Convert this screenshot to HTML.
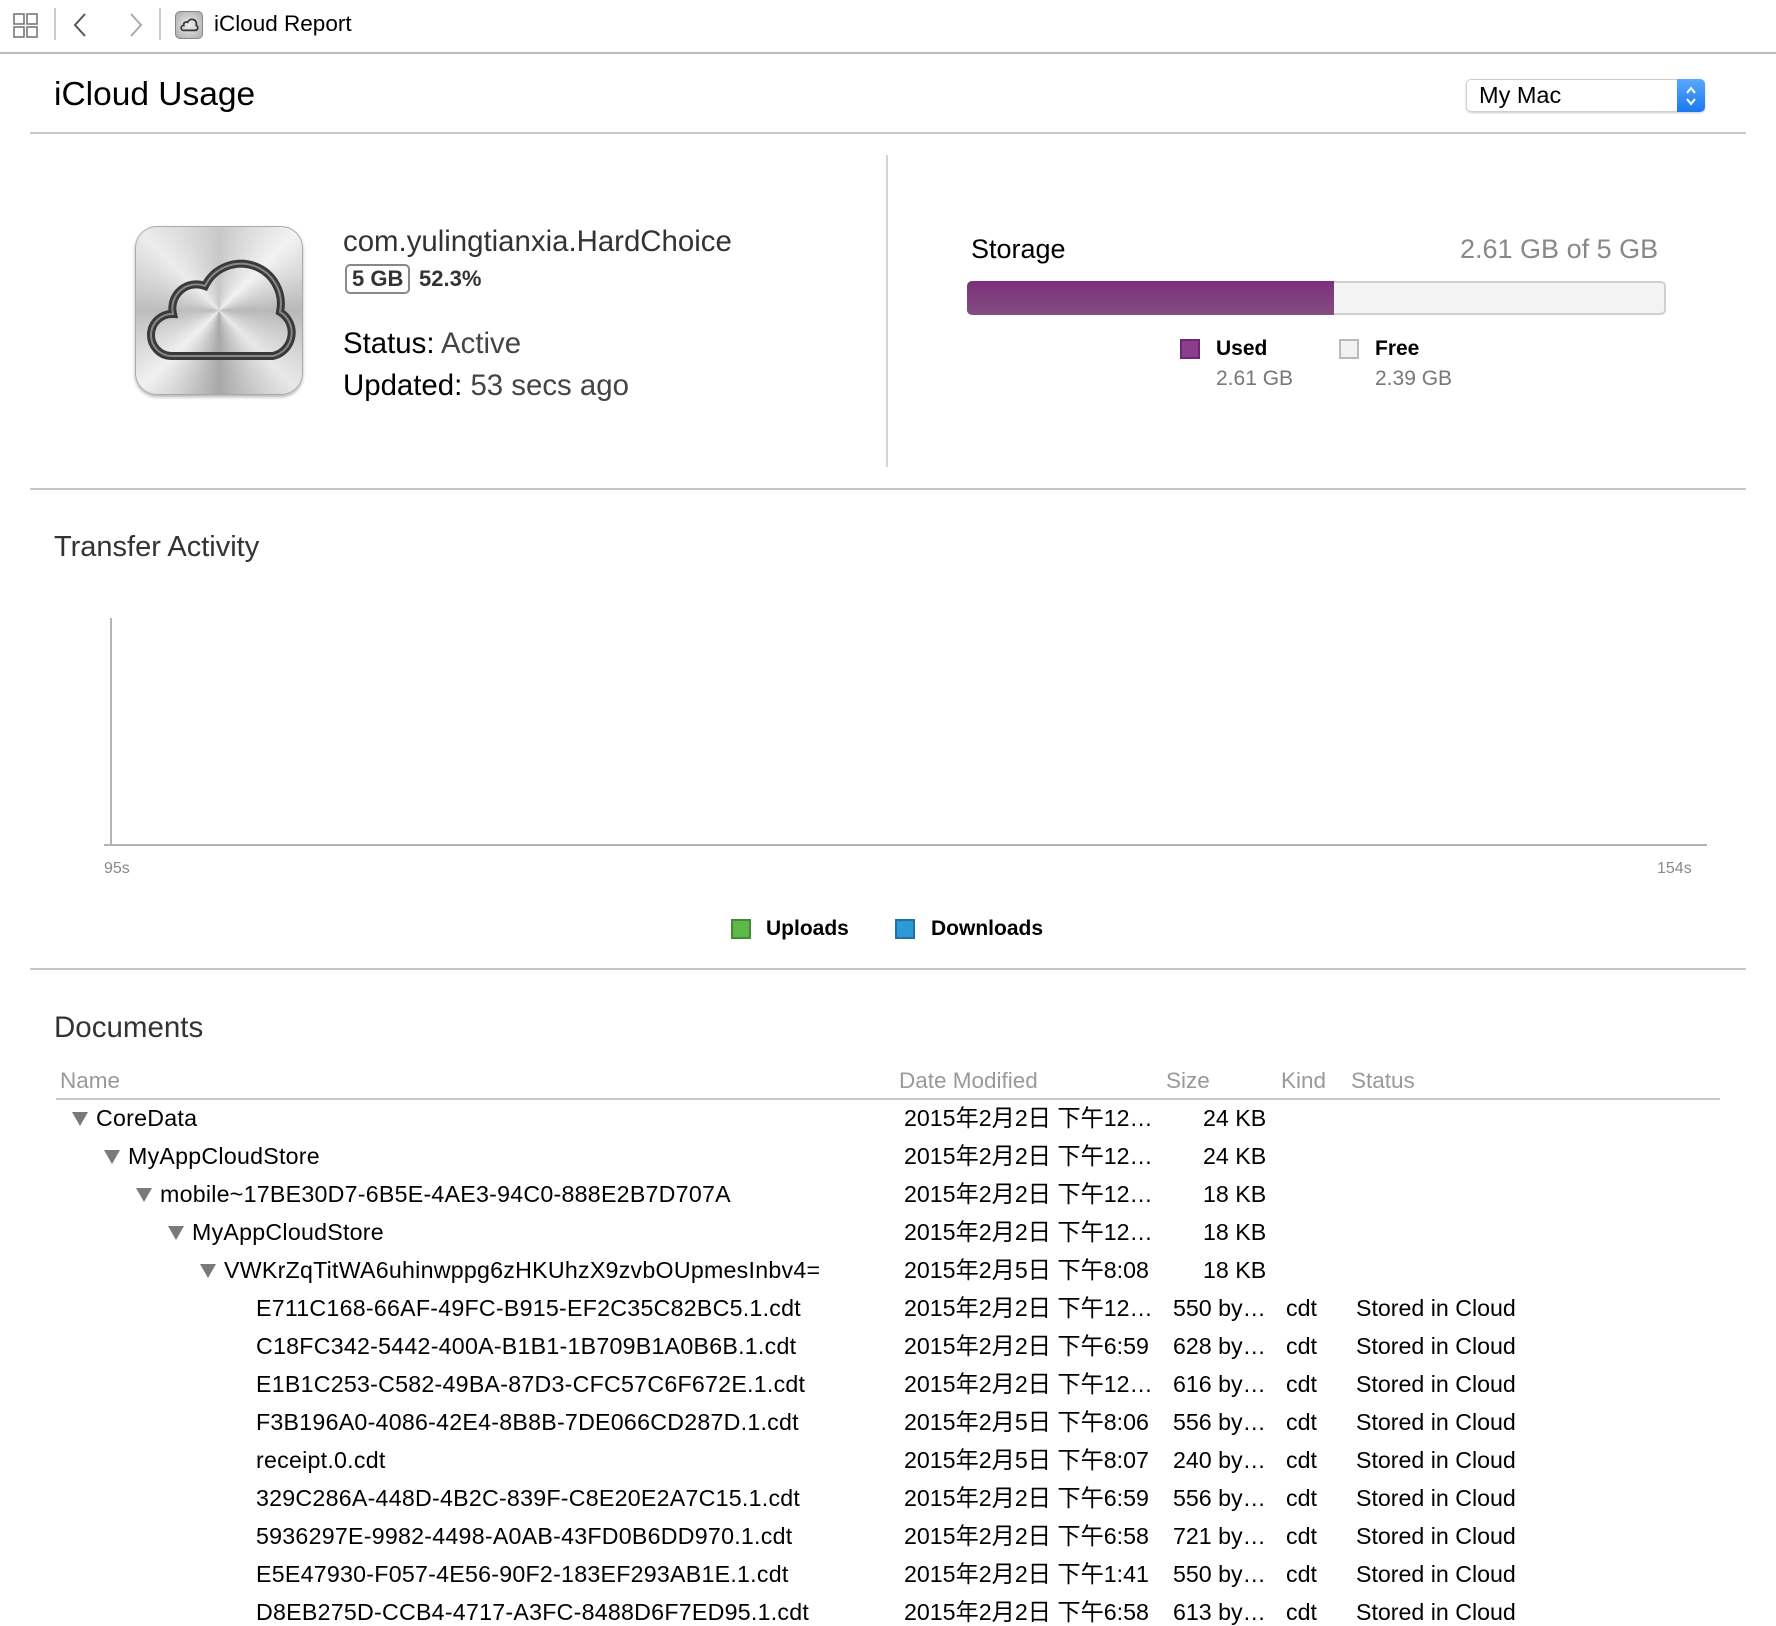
<!DOCTYPE html>
<html><head><meta charset="utf-8">
<style>
*{margin:0;padding:0;box-sizing:border-box}
body{width:1776px;height:1626px;background:#fff;position:relative;overflow:hidden;font-family:"Liberation Sans","Noto Sans CJK SC",sans-serif;color:#000}
.a{position:absolute;white-space:nowrap}
.hl{position:absolute;height:2px;background:#c8c8c8}
.r{position:absolute;font-size:23.2px;line-height:26px;white-space:nowrap}
.n{letter-spacing:0.25px}
.tri{position:absolute;width:0;height:0;border-left:8px solid transparent;border-right:8px solid transparent;border-top:14px solid #7a7a7a}
</style></head><body>
<!-- toolbar -->
<svg class="a" style="left:12px;top:12px" width="28" height="28" viewBox="0 0 28 28" fill="none" stroke="#777" stroke-width="1.6">
<rect x="2" y="2" width="10" height="10"/><rect x="15" y="2" width="10" height="10"/><rect x="2" y="15" width="10" height="10"/><rect x="15" y="15" width="10" height="10"/>
</svg>
<div class="a" style="left:54px;top:8px;width:2px;height:32px;background:#ccc"></div>
<svg class="a" style="left:72px;top:12px" width="16" height="26" viewBox="0 0 16 26"><path d="M13 2 L3 13 L13 24" fill="none" stroke="#555" stroke-width="2"/></svg>
<svg class="a" style="left:128px;top:12px" width="16" height="26" viewBox="0 0 16 26"><path d="M3 2 L13 13 L3 24" fill="none" stroke="#aaa" stroke-width="2"/></svg>
<div class="a" style="left:159px;top:8px;width:2px;height:32px;background:#ccc"></div>
<div class="a" style="left:175px;top:11px;width:28px;height:28px;border-radius:5px;background:radial-gradient(circle,#eee,#aaa);border:1px solid #888"></div>
<svg class="a" style="left:177px;top:15px" width="24" height="20" viewBox="0 0 168 169"><path d="M38,130 H138 A22,22 0 0 0 145,88 A38,38 0 0 0 72,62 A22,22 0 0 0 40,88 A21,21 0 0 0 38,130 Z" fill="none" stroke="#333" stroke-width="14"/></svg>
<div class="a" style="left:214px;top:11px;font-size:22.5px">iCloud Report</div>
<div class="hl" style="left:0;top:52px;width:1776px;background:#bbb"></div>

<div class="a" style="left:54px;top:76px;font-size:33.5px">iCloud Usage</div>
<div class="a" style="left:1466px;top:79px;width:239px;height:33px;border:1px solid #d0d0d0;border-radius:5px;box-shadow:0 1px 2px rgba(0,0,0,.2);background:#fff"></div>
<div class="a" style="left:1479px;top:82px;font-size:23.5px">My Mac</div>
<div class="a" style="left:1677px;top:79px;width:28px;height:33px;background:linear-gradient(#5aa8ff,#1a78f0);border-radius:0 5px 5px 0"></div>
<svg class="a" style="left:1683px;top:84px" width="16" height="24" viewBox="0 0 16 24"><path d="M4 9 L8 4 L12 9 M4 15 L8 20 L12 15" fill="none" stroke="#fff" stroke-width="2"/></svg>
<div class="hl" style="left:30px;top:132px;width:1716px"></div>

<!-- app info -->
<div class="a" style="left:135px;top:226px;width:168px;height:169px;border-radius:22px;border:1px solid #aaa;background:conic-gradient(from 0deg,#c8c8c8,#f2f2f2,#b8b8b8,#e8e8e8,#a8a8a8,#f0f0f0,#bdbdbd,#ececec,#c8c8c8);box-shadow:0 2px 3px rgba(0,0,0,.3)"></div>
<svg class="a" style="left:135px;top:226px" width="168" height="169" viewBox="0 0 168 169"><path d="M36,130 H138 A24,24 0 0 0 145,86 A40,40 0 0 0 70,60 A24,24 0 0 0 38,88 A21,21 0 0 0 36,130 Z" fill="none" stroke="#3a3a3a" stroke-width="8"/><path d="M36,130 H138 A24,24 0 0 0 145,86 A40,40 0 0 0 70,60 A24,24 0 0 0 38,88 A21,21 0 0 0 36,130 Z" fill="none" stroke="#888" stroke-width="2"/></svg>
<div class="a" style="left:343px;top:225px;font-size:29.4px;color:#333">com.yulingtianxia.HardChoice</div>
<div class="a" style="left:345px;top:264px;width:65px;height:30px;border:2px solid #888;border-radius:5px"></div>
<div class="a" style="left:352px;top:266px;font-size:22px;font-weight:bold;color:#333">5 GB</div>
<div class="a" style="left:419px;top:266px;font-size:22px;font-weight:bold;color:#333">52.3%</div>
<div class="a" style="left:343px;top:327px;font-size:29.4px">Status: <span style="color:#444">Active</span></div>
<div class="a" style="left:343px;top:369px;font-size:29.4px">Updated: <span style="color:#444">53 secs ago</span></div>

<div class="a" style="left:886px;top:155px;width:2px;height:312px;background:#d4d4d4"></div>

<!-- storage -->
<div class="a" style="left:971px;top:234px;font-size:27px">Storage</div>
<div class="a" style="left:1460px;top:234px;font-size:27px;color:#888">2.61 GB of 5 GB</div>
<div class="a" style="left:967px;top:281px;width:699px;height:34px;border:2px solid #d0d0d0;border-radius:5px;background:#f3f3f3"></div>
<div class="a" style="left:967px;top:281px;width:367px;height:34px;border-radius:5px 0 0 5px;background:linear-gradient(#7e2f7e,#814f80)"></div>
<div class="a" style="left:1180px;top:339px;width:20px;height:20px;background:#8c3d8f;border:2px solid #6a2a6c"></div>
<div class="a" style="left:1216px;top:337px;font-size:21px;font-weight:bold">Used</div>
<div class="a" style="left:1216px;top:367px;font-size:21px;color:#777">2.61 GB</div>
<div class="a" style="left:1339px;top:339px;width:20px;height:20px;background:#f2f2f2;border:2px solid #bbb"></div>
<div class="a" style="left:1375px;top:337px;font-size:21px;font-weight:bold">Free</div>
<div class="a" style="left:1375px;top:367px;font-size:21px;color:#777">2.39 GB</div>

<div class="hl" style="left:30px;top:488px;width:1716px"></div>

<!-- transfer -->
<div class="a" style="left:54px;top:531px;font-size:29px;color:#333">Transfer Activity</div>
<div class="a" style="left:110px;top:618px;width:2px;height:227px;background:#b4b4b4"></div>
<div class="a" style="left:104px;top:844px;width:1603px;height:2px;background:#b4b4b4"></div>
<div class="a" style="left:104px;top:860px;font-size:16px;color:#888">95s</div>
<div class="a" style="left:1657px;top:860px;font-size:16px;color:#888">154s</div>
<div class="a" style="left:731px;top:919px;width:20px;height:20px;background:#5db84a;border:2px solid #468a39"></div>
<div class="a" style="left:766px;top:917px;font-size:21px;font-weight:bold">Uploads</div>
<div class="a" style="left:895px;top:919px;width:20px;height:20px;background:#2b9ad8;border:2px solid #1f71a3"></div>
<div class="a" style="left:931px;top:917px;font-size:21px;font-weight:bold">Downloads</div>

<div class="hl" style="left:30px;top:968px;width:1716px"></div>

<!-- documents -->
<div class="a" style="left:54px;top:1011px;font-size:29.5px;color:#333">Documents</div>
<div class="a" style="left:60px;top:1068px;font-size:22.5px;color:#999">Name</div>
<div class="a" style="left:899px;top:1068px;font-size:22.5px;color:#999">Date Modified</div>
<div class="a" style="left:1166px;top:1068px;font-size:22.5px;color:#999">Size</div>
<div class="a" style="left:1281px;top:1068px;font-size:22.5px;color:#999">Kind</div>
<div class="a" style="left:1351px;top:1068px;font-size:22.5px;color:#999">Status</div>
<div class="hl" style="left:56px;top:1098px;width:1664px"></div>

<div class="tri" style="left:72px;top:1112px"></div><div class="r n" style="left:96px;top:1105px">CoreData</div><div class="r" style="left:904px;top:1105px">2015年2月2日 下午12…</div><div class="r" style="left:1203px;top:1105px">24 KB</div>
<div class="tri" style="left:104px;top:1150px"></div><div class="r n" style="left:128px;top:1143px">MyAppCloudStore</div><div class="r" style="left:904px;top:1143px">2015年2月2日 下午12…</div><div class="r" style="left:1203px;top:1143px">24 KB</div>
<div class="tri" style="left:136px;top:1188px"></div><div class="r n" style="left:160px;top:1181px">mobile~17BE30D7-6B5E-4AE3-94C0-888E2B7D707A</div><div class="r" style="left:904px;top:1181px">2015年2月2日 下午12…</div><div class="r" style="left:1203px;top:1181px">18 KB</div>
<div class="tri" style="left:168px;top:1226px"></div><div class="r n" style="left:192px;top:1219px">MyAppCloudStore</div><div class="r" style="left:904px;top:1219px">2015年2月2日 下午12…</div><div class="r" style="left:1203px;top:1219px">18 KB</div>
<div class="tri" style="left:200px;top:1264px"></div><div class="r n" style="left:224px;top:1257px">VWKrZqTitWA6uhinwppg6zHKUhzX9zvbOUpmesInbv4=</div><div class="r" style="left:904px;top:1257px">2015年2月5日 下午8:08</div><div class="r" style="left:1203px;top:1257px">18 KB</div>

<div class="r n" style="left:256px;top:1295px">E711C168-66AF-49FC-B915-EF2C35C82BC5.1.cdt</div><div class="r" style="left:904px;top:1295px">2015年2月2日 下午12…</div><div class="r" style="left:1173px;top:1295px">550 by…</div><div class="r" style="left:1286px;top:1295px">cdt</div><div class="r" style="left:1356px;top:1295px">Stored in Cloud</div>
<div class="r n" style="left:256px;top:1333px">C18FC342-5442-400A-B1B1-1B709B1A0B6B.1.cdt</div><div class="r" style="left:904px;top:1333px">2015年2月2日 下午6:59</div><div class="r" style="left:1173px;top:1333px">628 by…</div><div class="r" style="left:1286px;top:1333px">cdt</div><div class="r" style="left:1356px;top:1333px">Stored in Cloud</div>
<div class="r n" style="left:256px;top:1371px">E1B1C253-C582-49BA-87D3-CFC57C6F672E.1.cdt</div><div class="r" style="left:904px;top:1371px">2015年2月2日 下午12…</div><div class="r" style="left:1173px;top:1371px">616 by…</div><div class="r" style="left:1286px;top:1371px">cdt</div><div class="r" style="left:1356px;top:1371px">Stored in Cloud</div>
<div class="r n" style="left:256px;top:1409px">F3B196A0-4086-42E4-8B8B-7DE066CD287D.1.cdt</div><div class="r" style="left:904px;top:1409px">2015年2月5日 下午8:06</div><div class="r" style="left:1173px;top:1409px">556 by…</div><div class="r" style="left:1286px;top:1409px">cdt</div><div class="r" style="left:1356px;top:1409px">Stored in Cloud</div>
<div class="r n" style="left:256px;top:1447px">receipt.0.cdt</div><div class="r" style="left:904px;top:1447px">2015年2月5日 下午8:07</div><div class="r" style="left:1173px;top:1447px">240 by…</div><div class="r" style="left:1286px;top:1447px">cdt</div><div class="r" style="left:1356px;top:1447px">Stored in Cloud</div>
<div class="r n" style="left:256px;top:1485px">329C286A-448D-4B2C-839F-C8E20E2A7C15.1.cdt</div><div class="r" style="left:904px;top:1485px">2015年2月2日 下午6:59</div><div class="r" style="left:1173px;top:1485px">556 by…</div><div class="r" style="left:1286px;top:1485px">cdt</div><div class="r" style="left:1356px;top:1485px">Stored in Cloud</div>
<div class="r n" style="left:256px;top:1523px">5936297E-9982-4498-A0AB-43FD0B6DD970.1.cdt</div><div class="r" style="left:904px;top:1523px">2015年2月2日 下午6:58</div><div class="r" style="left:1173px;top:1523px">721 by…</div><div class="r" style="left:1286px;top:1523px">cdt</div><div class="r" style="left:1356px;top:1523px">Stored in Cloud</div>
<div class="r n" style="left:256px;top:1561px">E5E47930-F057-4E56-90F2-183EF293AB1E.1.cdt</div><div class="r" style="left:904px;top:1561px">2015年2月2日 下午1:41</div><div class="r" style="left:1173px;top:1561px">550 by…</div><div class="r" style="left:1286px;top:1561px">cdt</div><div class="r" style="left:1356px;top:1561px">Stored in Cloud</div>
<div class="r n" style="left:256px;top:1599px">D8EB275D-CCB4-4717-A3FC-8488D6F7ED95.1.cdt</div><div class="r" style="left:904px;top:1599px">2015年2月2日 下午6:58</div><div class="r" style="left:1173px;top:1599px">613 by…</div><div class="r" style="left:1286px;top:1599px">cdt</div><div class="r" style="left:1356px;top:1599px">Stored in Cloud</div>
</body></html>
